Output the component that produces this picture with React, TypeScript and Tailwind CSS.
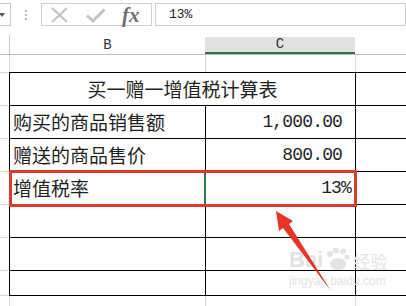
import React from "react";

const cjk = { fontFamily: '"Noto Sans CJK SC", "Noto Sans", sans-serif' };
const mono = { fontFamily: '"Liberation Mono", monospace' };

type Row = {
  h: string;
  label?: string;
  value?: string;
  title?: string;
  table: boolean;
  selected?: boolean;
};

const rows: Row[] = [
  { h: "h-[33px]", title: "买一赠一增值税计算表", table: true },
  { h: "h-[33px]", label: "购买的商品销售额", value: "1,000.00 ", table: true },
  { h: "h-[33px]", label: "赠送的商品售价", value: "800.00 ", table: true },
  { h: "h-[33px]", label: "增值税率", value: "13%", table: true, selected: true },
  { h: "h-[33px]", table: true },
  { h: "h-[33px]", table: true },
  { h: "h-[25px]", table: true },
];

function FormulaBar() {
  return (
    <div className="flex h-[28px] items-start pt-[3px] bg-white">
      <div className="w-[11px] h-[23px] border-y border-r border-[#c8c8c8] flex items-center">
        <span className="block w-0 h-0 border-x-[3px] border-x-transparent border-t-[4px] border-t-[#555] ml-[-1px]" />
      </div>
      <div className="w-[30px] flex flex-col items-center gap-[2px] pt-[7px]">
        <span className="w-[2px] h-[2px] bg-[#b8b8b8]" />
        <span className="w-[2px] h-[2px] bg-[#b8b8b8]" />
        <span className="w-[2px] h-[2px] bg-[#b8b8b8]" />
      </div>
      <div className="w-[111px] h-[23px] border border-[#d0d0d0] flex items-center relative">
        <svg className="absolute left-[8px] top-[3px]" width="20" height="16" viewBox="0 0 20 16">
          <path d="M2 1 L17 15 M17 1 L2 15" stroke="#c3c3c3" strokeWidth="2.2" fill="none" />
        </svg>
        <svg className="absolute left-[44px] top-[4px]" width="20" height="15" viewBox="0 0 20 15">
          <path d="M1 7.5 L7 13 L18.5 1.5" stroke="#c3c3c3" strokeWidth="3" fill="none" />
        </svg>
        <span
          className="absolute left-[80px] top-[-2px] text-[21px] italic font-bold text-[#6e6e6e] leading-[26px]"
          style={{ fontFamily: '"Liberation Serif", serif' }}
        >
          fx
        </span>
      </div>
      <div className="ml-[3px] flex-1 h-[23px] border border-[#d0d0d0] pl-[13px] flex items-center">
        <span className="text-[13px] text-[#222]" style={mono}>
          13%
        </span>
      </div>
    </div>
  );
}

function ColumnHeader() {
  return (
    <div className="flex flex-col">
      <div className="h-[9px] flex">
        <div className="w-[9px]" />
        <div className="w-[196px] border-l border-[#c8c8c8] mt-[7px]" />
      </div>
      <div className="h-[18px] flex border-b border-[#bdbdbd]">
        <div className="w-[9px]" />
        <div
          className="w-[196px] border-l border-[#c8c8c8] flex items-center justify-center text-[14px] text-[#333]"
          style={mono}
        >
          B
        </div>
        <div
          className="w-[150px] bg-[#e1e1e1] border-b-2 border-[#2f6f4e] flex items-center justify-center text-[14px] text-[#333]"
          style={mono}
        >
          C
        </div>
        <div className="flex-1" />
      </div>
    </div>
  );
}

function GridRow({ row }: { row: Row }) {
  const t = row.table ? "border-black" : "border-[#d6d6d6]";
  return (
    <div className={`flex ${row.h}`}>
      <div className="w-[9px] border-t border-[#d6d6d6]" />
      {row.title ? (
        <div
          className={`w-[346px] border-t border-l ${t} flex items-center justify-center text-[19px] text-[#1f1f1f]`}
          style={cjk}
        >
          {row.title}
        </div>
      ) : (
        <>
          <div
            className={`w-[196px] border-t border-l ${t} flex items-center pl-[3px] text-[19px] text-[#1f1f1f]`}
            style={cjk}
          >
            {row.label}
          </div>
          <div
            className={`w-[150px] border-t ${t} ${
              row.selected ? "border-l-2 border-l-[#2f7a52] ml-[-1px]" : "border-l"
            } flex items-center justify-end pr-[3px] text-[18px] tracking-[-0.85px] text-[#1f1f1f] whitespace-pre`}
            style={mono}
          >
            {row.value}
          </div>
        </>
      )}
      <div className={`flex-1 border-t border-[#d6d6d6] border-l ${t}`} />
    </div>
  );
}

export default function App() {
  return (
    <div className="w-[406px] h-[306px] overflow-hidden bg-white relative">
      <FormulaBar />
      <ColumnHeader />
      <div className="flex h-[17px]">
        <div className="w-[9px]" />
        <div className="w-[196px] border-l border-[#d6d6d6]" />
        <div className="w-[150px] border-l border-[#d6d6d6]" />
        <div className="flex-1 border-l border-[#d6d6d6]" />
      </div>
      {rows.map((r, i) => (
        <GridRow key={i} row={r} />
      ))}
      <div className="flex h-[11px] border-t border-black">
        <div className="w-[9px] border-t border-[#d6d6d6] mt-[-1px]" />
        <div className="w-[196px] border-l border-[#d6d6d6]" />
        <div className="w-[150px] border-l border-[#d6d6d6]" />
        <div className="flex-1 border-l border-[#d6d6d6]" />
      </div>

      {/* annotation: red box around the selected row */}
      <div className="absolute left-[9px] top-[170px] w-[348px] h-[37px] border-[3px] border-[#dc3a2c]" />

      {/* watermark */}
      <div className="absolute left-[289px] top-[247px] text-[#e3e3e3] pointer-events-none">
        <div className="flex items-end">
          <span className="text-[22px] font-bold leading-[22px]" style={{ fontFamily: '"Liberation Sans", sans-serif' }}>
            Bai
          </span>
          <svg width="26" height="24" viewBox="0 0 26 24" className="mx-[1px]">
            <circle cx="6" cy="7" r="3" fill="#e3e3e3" />
            <circle cx="12" cy="3.5" r="3" fill="#e3e3e3" />
            <circle cx="19" cy="4.5" r="3" fill="#e3e3e3" />
            <circle cx="23" cy="10" r="2.6" fill="#e3e3e3" />
            <ellipse cx="14" cy="17" rx="8" ry="6" fill="#e3e3e3" />
          </svg>
          <span className="text-[17px] leading-[20px] ml-[2px]" style={cjk}>
            经验
          </span>
        </div>
        <div className="text-[12px] leading-[14px] mt-[3px]" style={{ fontFamily: '"Liberation Sans", sans-serif' }}>
          jingyan.baidu.com
        </div>
      </div>

      {/* annotation: arrow pointing at the selected cell */}
      <svg className="absolute left-0 top-0 pointer-events-none" width="406" height="306" viewBox="0 0 406 306">
        <polygon
          points="276,211 293,221 289,224 331,291 283,228 279,231"
          fill="#e8342a"
        />
      </svg>
    </div>
  );
}
